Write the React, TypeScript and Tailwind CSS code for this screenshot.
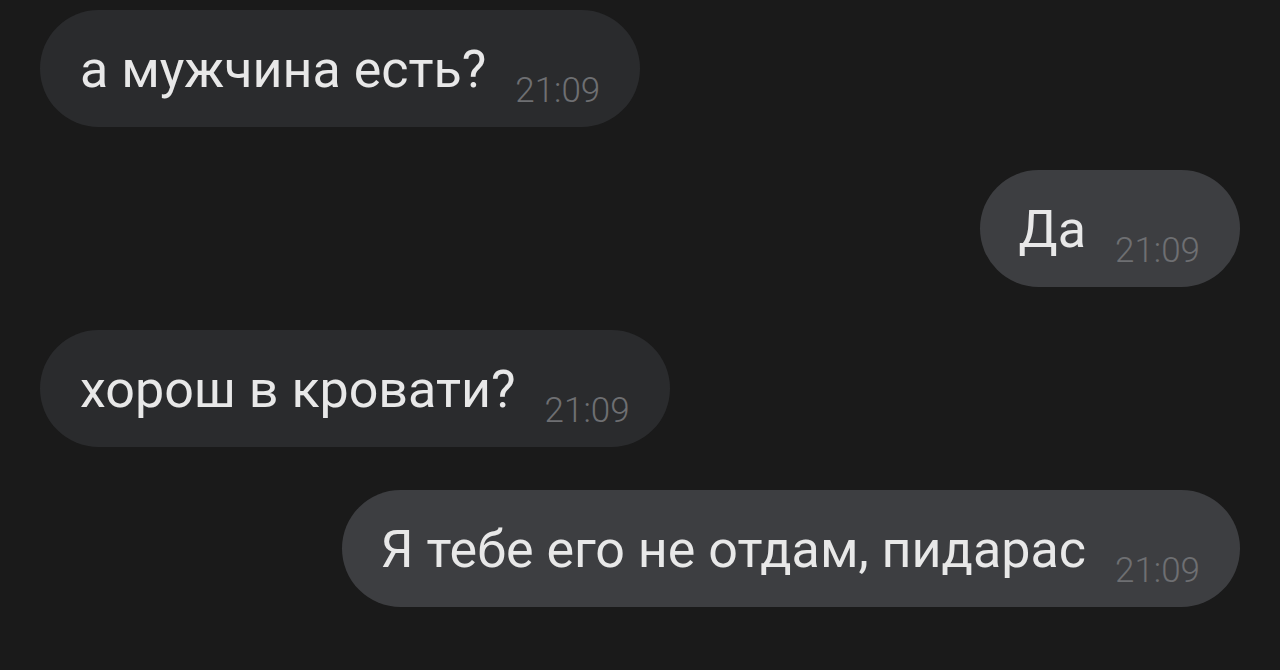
const messages = [
  { id: 1, text: "а мужчина есть?", time: "21:09", mine: false },
  { id: 2, text: "Да", time: "21:09", mine: true },
  { id: 3, text: "хорош в кровати?", time: "21:09", mine: false },
  { id: 4, text: "Я тебе его не отдам, пидарас", time: "21:09", mine: true },
];

function Bubble({ text, time, mine }: { text: string; time: string; mine: boolean }) {
  return (
    <div
      className={
        mine
          ? "self-end flex items-start h-[117px] rounded-full bg-[#3d3e41] pl-[39px] pr-[40px]"
          : "self-start flex items-start h-[117px] rounded-full bg-[#2a2b2d] pl-[40px] pr-[40px]"
      }
    >
      <span className="mt-[34px] text-[52px] leading-none text-[#e8e8e8] whitespace-nowrap">
        {text}
      </span>
      <span className="ml-[29px] mt-[63px] text-[35px] leading-none font-light text-[#6e6f72]">
        {time}
      </span>
    </div>
  );
}

export default function App() {
  return (
    <div className="w-[1280px] h-[670px] overflow-hidden bg-[#1a1a1a] font-['Roboto','Noto_Sans',sans-serif]">
      <div className="flex flex-col gap-[43px] pt-[10px] pl-[40px] pr-[40px]">
        {messages.map((m) => (
          <Bubble key={m.id} text={m.text} time={m.time} mine={m.mine} />
        ))}
      </div>
    </div>
  );
}
